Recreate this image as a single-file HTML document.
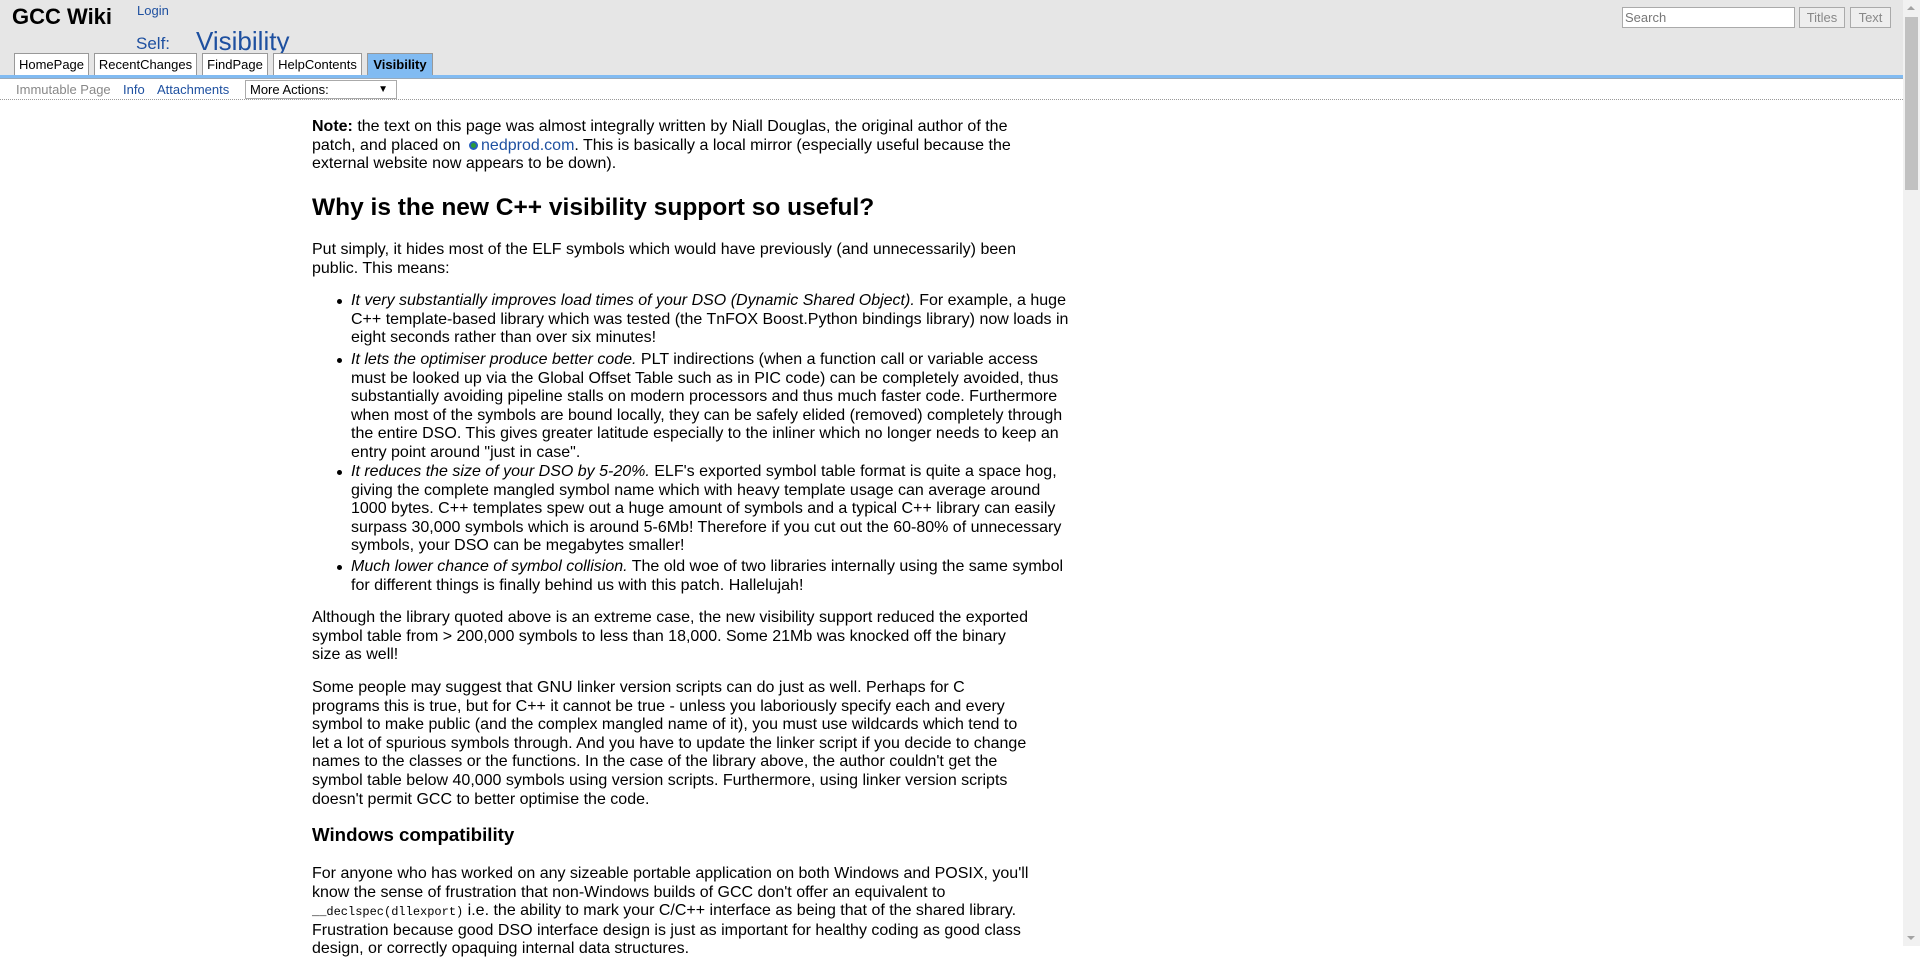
<!DOCTYPE html>
<html><head><meta charset="utf-8"><style>
*{box-sizing:border-box}
body{margin:0;width:1920px;height:946px;overflow:hidden;background:#fff;font-family:"Liberation Sans",Arial,sans-serif;color:#000;position:relative}
#hdr{position:absolute;left:0;top:0;width:1903px;height:75px;background:#e6e6e6}
#blue{position:absolute;left:0;top:75px;width:1903px;height:4px;background:#81bbf2;border-bottom:1px solid #9ab}
#act{position:absolute;left:0;top:79px;width:1903px;height:21px;background:#fff;border-bottom:1px dotted #999}
.a{position:absolute;font-size:13px;color:#1e50a0;white-space:nowrap}
.tab{position:absolute;top:53px;height:23px;background:#fff;border:1px solid #999;border-bottom:none;font-size:13px;line-height:21px;text-align:center;color:#000}
.p{position:absolute;left:312px;font-size:16px;line-height:18.6px;white-space:nowrap}
.li{position:absolute;left:351px;font-size:16px;line-height:18.6px;white-space:nowrap}
.dot{position:absolute;left:-14px;top:7px;width:5px;height:5px;border-radius:50%;background:#000}
a{color:#1e50a0;text-decoration:none}
code{font-family:"Liberation Mono",monospace;font-size:12px}
#sb{position:absolute;left:1903px;top:0;width:17px;height:946px;background:#f1f1f1}
</style></head><body>
<div id="hdr"></div>
<div style="position:absolute;left:12px;top:4px;font-size:22px;font-weight:bold">GCC Wiki</div>
<div class="a" style="left:137px;top:3px">Login</div>
<div class="a" style="left:136px;top:34px;font-size:17px">Self:</div>
<div class="a" style="left:196px;top:26px;font-size:26px">Visibility</div>
<div class="tab" style="left:14px;width:75px">HomePage</div>
<div class="tab" style="left:94px;width:103px">RecentChanges</div>
<div class="tab" style="left:202px;width:66px">FindPage</div>
<div class="tab" style="left:273px;width:89px">HelpContents</div>
<div class="tab" style="left:367px;width:66px;background:#81bbf2;font-weight:bold">Visibility</div>
<div style="position:absolute;left:1622px;top:7px;width:173px;height:21px;background:#fff;border:1px solid #aaa;font-size:13px;color:#777;padding:1px 2px;line-height:17px">Search</div>
<div style="position:absolute;left:1799px;top:7px;width:46px;height:21px;background:#eee;border:1px solid #aaa;font-size:13px;color:#888;text-align:center;line-height:19px">Titles</div>
<div style="position:absolute;left:1850px;top:7px;width:41px;height:21px;background:#eee;border:1px solid #aaa;font-size:13px;color:#888;text-align:center;line-height:19px">Text</div>
<div id="blue"></div>
<div id="act"></div>
<div class="a" style="left:16px;top:82px;color:#888">Immutable Page</div>
<div class="a" style="left:123px;top:82px">Info</div>
<div class="a" style="left:157px;top:82px">Attachments</div>
<div style="position:absolute;left:245px;top:80px;width:152px;height:19px;border:1px solid #aaa;background:#fff;font-size:13px;line-height:17px;padding-left:4px">More Actions:<span style="position:absolute;right:8px;top:0;font-size:10px">&#9660;</span></div>

<div class="p" style="top:118px"><b>Note:</b> the text on this page was almost integrally written by Niall Douglas, the original author of the<br>patch, and placed on <span style="display:inline-block;width:9px;height:9px;border-radius:50%;background:#2a9a3a;border:2px solid #2860c0;margin:0 3px 0 4px;vertical-align:0"></span><a>nedprod.com</a>. This is basically a local mirror (especially useful because the<br>external website now appears to be down).</div>
<div class="p" style="top:193px;font-size:24.5px;font-weight:bold;line-height:30px">Why is the new C++ visibility support so useful?</div>
<div class="p" style="top:241px">Put simply, it hides most of the ELF symbols which would have previously (and unnecessarily) been<br>public. This means:</div>
<div class="li" style="top:292px"><span class="dot"></span><i>It very substantially improves load times of your DSO (Dynamic Shared Object).</i> For example, a huge<br>C++ template-based library which was tested (the TnFOX Boost.Python bindings library) now loads in<br>eight seconds rather than over six minutes!</div>
<div class="li" style="top:351px"><span class="dot"></span><i>It lets the optimiser produce better code.</i> PLT indirections (when a function call or variable access<br>must be looked up via the Global Offset Table such as in PIC code) can be completely avoided, thus<br>substantially avoiding pipeline stalls on modern processors and thus much faster code. Furthermore<br>when most of the symbols are bound locally, they can be safely elided (removed) completely through<br>the entire DSO. This gives greater latitude especially to the inliner which no longer needs to keep an<br>entry point around "just in case".</div>
<div class="li" style="top:463px"><span class="dot"></span><i>It reduces the size of your DSO by 5-20%.</i> ELF's exported symbol table format is quite a space hog,<br>giving the complete mangled symbol name which with heavy template usage can average around<br>1000 bytes. C++ templates spew out a huge amount of symbols and a typical C++ library can easily<br>surpass 30,000 symbols which is around 5-6Mb! Therefore if you cut out the 60-80% of unnecessary<br>symbols, your DSO can be megabytes smaller!</div>
<div class="li" style="top:558px"><span class="dot"></span><i>Much lower chance of symbol collision.</i> The old woe of two libraries internally using the same symbol<br>for different things is finally behind us with this patch. Hallelujah!</div>
<div class="p" style="top:609px">Although the library quoted above is an extreme case, the new visibility support reduced the exported<br>symbol table from &gt; 200,000 symbols to less than 18,000. Some 21Mb was knocked off the binary<br>size as well!</div>
<div class="p" style="top:679px">Some people may suggest that GNU linker version scripts can do just as well. Perhaps for C<br>programs this is true, but for C++ it cannot be true - unless you laboriously specify each and every<br>symbol to make public (and the complex mangled name of it), you must use wildcards which tend to<br>let a lot of spurious symbols through. And you have to update the linker script if you decide to change<br>names to the classes or the functions. In the case of the library above, the author couldn't get the<br>symbol table below 40,000 symbols using version scripts. Furthermore, using linker version scripts<br>doesn't permit GCC to better optimise the code.</div>
<div class="p" style="top:823px;font-size:18.7px;font-weight:bold;line-height:23px">Windows compatibility</div>
<div class="p" style="top:865px">For anyone who has worked on any sizeable portable application on both Windows and POSIX, you'll<br>know the sense of frustration that non-Windows builds of GCC don't offer an equivalent to<br><code>__declspec(dllexport)</code> i.e. the ability to mark your C/C++ interface as being that of the shared library.<br>Frustration because good DSO interface design is just as important for healthy coding as good class<br>design, or correctly opaquing internal data structures.</div>

<div id="sb"><div style="position:absolute;left:2px;top:17px;width:13px;height:173px;background:#c1c1c1"></div>
<div style="position:absolute;left:4px;top:6px;border:4px solid transparent;border-bottom:4px solid #a3a3a3;border-top:none"></div>
<div style="position:absolute;left:4px;top:936px;border:4px solid transparent;border-top:4px solid #a3a3a3;border-bottom:none"></div></div>
</body></html>
